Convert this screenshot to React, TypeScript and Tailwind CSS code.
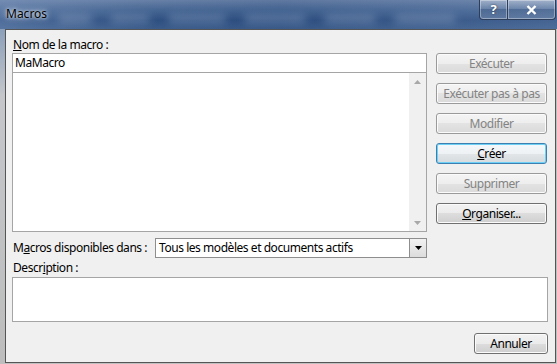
import React from 'react';

const FONT = { fontFamily: '"Segoe UI", "Noto Sans", sans-serif' };

function WinButton({
  children,
  disabled,
  isDefault,
  className = '',
}: {
  children: React.ReactNode;
  disabled?: boolean;
  isDefault?: boolean;
  className?: string;
}) {
  let look =
    'border-[#707070] bg-[linear-gradient(to_bottom,#f2f2f2_0%,#ebebeb_50%,#dddddd_50%,#cfcfcf_100%)] text-black shadow-[inset_0_0_0_1px_#fbfbfb]';
  if (disabled)
    look =
      'border-[#9a9a9a] bg-[linear-gradient(to_bottom,#f4f4f4_0%,#eeeeee_50%,#e3e3e3_50%,#dadada_100%)] text-[#838383] shadow-[inset_0_0_0_1px_#fbfbfb]';
  if (isDefault)
    look =
      'border-[#3c7fb1] bg-[linear-gradient(to_bottom,#f5f8fa_0%,#eef2f4_50%,#e2e6e9_50%,#d6dbde_100%)] text-black shadow-[inset_0_0_0_1px_#6fd0f5]';
  return (
    <div
      className={`flex h-[21px] items-center justify-center whitespace-nowrap rounded-[3px] border text-[12px] leading-none ${look} ${className}`}
    >
      {children}
    </div>
  );
}

function ScrollArrow({ up }: { up?: boolean }) {
  return (
    <div className="flex h-[17px] items-center justify-center">
      <svg width="7" height="4" viewBox="0 0 7 4">
        {up ? <path d="M0 4 L3.5 0 L7 4 Z" fill="#a8a8a8" /> : <path d="M0 0 L3.5 4 L7 0 Z" fill="#a8a8a8" />}
      </svg>
    </div>
  );
}

export default function App() {
  return (
    <div className="flex h-[364px] w-[557px] flex-col bg-[#b8bcc2] tracking-[-0.45px] text-black" style={FONT}>
      {/* Title bar */}
      <div className="relative flex h-[29px] shrink-0 justify-between overflow-hidden bg-[linear-gradient(to_bottom,#7088ad_0%,#4a6a97_35%,#2f5183_70%,#3d5e8d_100%)]">
        <div className="pointer-events-none absolute inset-0 bg-[linear-gradient(to_right,rgba(120,145,185,0.45)_0%,rgba(40,70,115,0.1)_25%,rgba(30,60,110,0.2)_50%,rgba(110,135,175,0.35)_100%)]" />
        <div className="pointer-events-none absolute left-[58px] top-[15px] flex gap-[18px] opacity-35 blur-[4px]">
          <div className="h-[8px] w-[34px] rounded-full bg-[#b4c4dc]" />
          <div className="h-[8px] w-[40px] rounded-full bg-[#b4c4dc]" />
          <div className="h-[8px] w-[58px] rounded-full bg-[#b4c4dc]" />
          <div className="h-[8px] w-[62px] rounded-full bg-[#b4c4dc]" />
          <div className="h-[8px] w-[52px] rounded-full bg-[#b4c4dc]" />
          <div className="h-[8px] w-[62px] rounded-full bg-[#b4c4dc]" />
        </div>
        <div className="relative ml-[6px] mt-[6px] text-[12px] leading-[16px] tracking-normal text-black [text-shadow:0_0_6px_rgba(255,255,255,0.9),0_0_3px_rgba(255,255,255,0.8)]">
          Macros
        </div>
        <div className="relative mr-[1px] flex h-[20px] self-start">
          <div className="flex w-[29px] items-center justify-center rounded-bl-[4px] border border-t-0 border-[#2c3e5a] bg-[linear-gradient(to_bottom,rgba(255,255,255,0.35),rgba(255,255,255,0.1)_50%,rgba(0,0,0,0.05)_50%,rgba(255,255,255,0.15))] shadow-[inset_0_0_0_1px_rgba(255,255,255,0.35)]">
            <span className="text-[13px] font-bold leading-none text-white [text-shadow:0_0_2px_#1c2c44]">?</span>
          </div>
          <div className="flex w-[48px] items-center justify-center rounded-br-[4px] border border-l-0 border-t-0 border-[#2c3e5a] bg-[linear-gradient(to_bottom,rgba(255,255,255,0.35),rgba(255,255,255,0.1)_50%,rgba(0,0,0,0.05)_50%,rgba(255,255,255,0.15))] shadow-[inset_0_0_0_1px_rgba(255,255,255,0.35)]">
            <svg width="11" height="10" viewBox="0 0 11 10">
              <path d="M1.5 1 L9.5 9 M9.5 1 L1.5 9" stroke="#ffffff" strokeWidth="2.4" />
            </svg>
          </div>
        </div>
      </div>

      {/* Body */}
      <div className="flex flex-1">
        <div className="w-[5px] shrink-0 bg-[linear-gradient(to_bottom,#8c9fba,#c4c6ca_20%,#bdbdbd)]" />
        <div className="flex w-[551px] flex-col border border-[#555555] bg-[#f0f0f0] pl-[6px] pr-[7px] pt-[7px]">
          <div className="flex">
            {/* Left column */}
            <div className="flex w-[415px] flex-col">
              <div className="h-[16px] whitespace-nowrap pl-[1px] text-[12px] leading-[16px]">
                <u>N</u>om de la macro :
              </div>
              <div className="flex h-[20px] items-center border border-[#a5a5a5] bg-white pl-[2px] text-[12px]">
                MaMacro
              </div>
              <div className="flex h-[159px] border border-t-0 border-[#a5a5a5] bg-white">
                <div className="flex-1" />
                <div className="flex w-[17px] flex-col justify-between bg-[#f0f0f0]">
                  <ScrollArrow up />
                  <ScrollArrow />
                </div>
              </div>
              <div className="mt-[6px] flex h-[20px] items-center">
                <div className="w-[143px] whitespace-nowrap pl-[1px] text-[12px] leading-[16px]">
                  M<u>a</u>cros disponibles dans :
                </div>
                <div className="flex h-[20px] flex-1 items-center border border-[#8e8e8e] bg-white">
                  <div className="flex-1 whitespace-nowrap pl-[3px] text-[12px]">Tous les modèles et documents actifs</div>
                  <div className="flex h-[18px] w-[17px] items-center justify-center border-l border-[#8e8e8e] bg-[linear-gradient(to_bottom,#f2f2f2,#dcdcdc)]">
                    <svg width="7" height="4" viewBox="0 0 7 4">
                      <path d="M0 0 L3.5 4 L7 0 Z" fill="#000000" />
                    </svg>
                  </div>
                </div>
              </div>
            </div>

            {/* Right column */}
            <div className="ml-[9px] mt-[16px] flex w-[111px] flex-col gap-[9px]">
              <WinButton disabled>Exécuter</WinButton>
              <WinButton disabled>Exécuter pas à pas</WinButton>
              <WinButton disabled>Modifier</WinButton>
              <WinButton isDefault>
                <span>
                  <u>C</u>réer
                </span>
              </WinButton>
              <WinButton disabled>Supprimer</WinButton>
              <WinButton>
                <span>
                  <u>O</u>rganiser...
                </span>
              </WinButton>
            </div>
          </div>

          <div className="mt-[2px] h-[16px] whitespace-nowrap pl-[1px] text-[12px] leading-[16px]">
            Descr<u>i</u>ption :
          </div>
          <div className="mt-[1px] h-[45px] w-[536px] border border-[#a5a5a5] bg-white" />

          <div className="mt-[11px] flex w-[536px] justify-end">
            <WinButton className="w-[74px]">Annuler</WinButton>
          </div>
        </div>
        <div className="flex-1 bg-[#c0c0c0]" />
      </div>
      <div className="h-[1px] bg-[#c0c0c0]" />
    </div>
  );
}
